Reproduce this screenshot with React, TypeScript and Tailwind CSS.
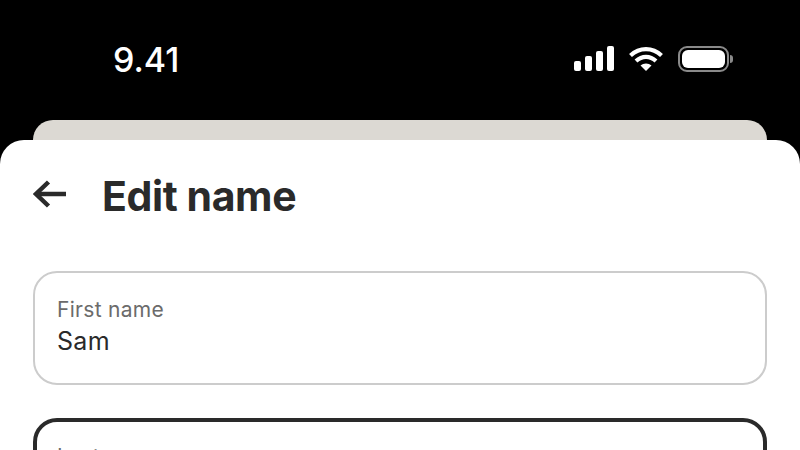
export default function App() {
  return (
    <div className="w-[800px] h-[450px] overflow-hidden bg-black font-['Inter',sans-serif]">
      {/* Status bar */}
      <div className="flex items-center justify-between h-[120px] pl-[113px] pr-[67px]">
        <span className="text-[34px] leading-none font-medium text-white">9.41</span>
        <div className="flex items-center gap-[15px] -translate-y-[1px]">
          <svg width="40" height="26" viewBox="0 0 40 26" fill="white">
            <rect x="0" y="15" width="7" height="10" rx="2" />
            <rect x="11" y="10" width="7" height="15" rx="2" />
            <rect x="22" y="5" width="7" height="20" rx="2" />
            <rect x="33" y="0" width="7" height="25" rx="2" />
          </svg>
          <svg width="34" height="26" viewBox="0 0 34 26" fill="none" stroke="white" strokeWidth="4.2">
            <path d="M1.5 9.5C10.5 1 23.5 1 32.5 9.5" />
            <path d="M7 15C13 9.5 21 9.5 27 15" />
            <path d="M17 25L11.5 19.5C14.5 16.8 19.5 16.8 22.5 19.5Z" fill="white" stroke="none" />
          </svg>
          <div className="flex items-center gap-[1px]">
            <div className="w-[51px] h-[26px] rounded-[9px] border-2 border-[#8a8a8a] p-[2px]">
              <div className="w-full h-full rounded-[6px] bg-white" />
            </div>
            <div className="w-[3px] h-[8px] rounded-r-full bg-[#8a8a8a]" />
          </div>
        </div>
      </div>

      {/* Card behind the sheet */}
      <div className="mx-[33px] h-[20px] rounded-t-[20px] bg-[#dcd9d3]" />

      {/* Sheet */}
      <div className="h-[400px] rounded-t-[24px] bg-white px-[33px]">
        <div className="flex items-center h-[112px]">
          <svg width="34" height="30" viewBox="0 0 34 30" fill="none" stroke="#2a2a2a" strokeWidth="4.5" className="shrink-0 -translate-y-[2px]">
            <path d="M33 15H3" />
            <path d="M15.5 3L3 15L15.5 27" />
          </svg>
          <h1 className="ml-[35px] text-[41px] leading-none font-bold text-[#2a2a2a] tracking-[-0.4px]">Edit name</h1>
        </div>

        <div className="mt-[19px] flex flex-col gap-[33px]">
          <div className="h-[114px] rounded-[24px] border-2 border-[#cccccc] px-[22px] pt-[22px]">
            <div className="text-[21px] leading-[30px] text-[#6b6b6b] tracking-[0.3px]">First name</div>
            <div className="text-[25px] leading-[32px] text-[#2a2a2a] tracking-[0.3px]">Sam</div>
          </div>
          <div className="h-[114px] rounded-[24px] border-4 border-[#2a2a2a] px-[20px] pt-[20px]">
            <div className="text-[21px] leading-[30px] text-[#6b6b6b] tracking-[0.3px]">Last name</div>
          </div>
        </div>
      </div>
    </div>
  );
}
